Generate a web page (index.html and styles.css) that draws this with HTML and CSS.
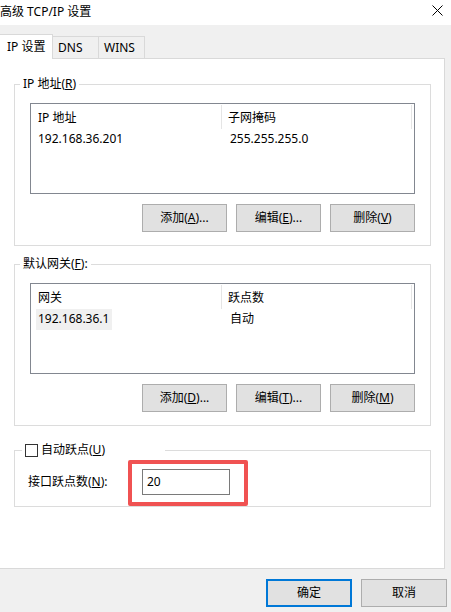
FILE: index.html
```html
<!DOCTYPE html>
<html lang="zh-CN">
<head>
<meta charset="utf-8">
<title>高级 TCP/IP 设置</title>
<link rel="stylesheet" href="styles.css">
</head>
<body>
<div class="window">
  <div class="titlebar">
    <span class="title">高级 TCP/IP 设置</span>
    <svg class="close" width="11" height="11" viewBox="0 0 11 11"><path d="M0.5 0.5 L10.5 10.5 M10.5 0.5 L0.5 10.5" stroke="#000" stroke-width="1" fill="none"/></svg>
  </div>
  <div class="tabs">
    <div class="tab active">IP 设置</div>
    <div class="tab">DNS</div>
    <div class="tab">WINS</div>
  </div>
  <div class="panel">
    <div class="group g1">
      <span class="legend">IP 地址(<u>R</u>)</span>
      <div class="list">
        <div class="lhead">
          <div class="col">IP 地址</div>
          <div class="col">子网掩码</div>
        </div>
        <div class="lrow">
          <div class="cell"><span class="val">192.168.36.201</span></div>
          <div class="cell"><span class="val">255.255.255.0</span></div>
        </div>
      </div>
      <div class="btnrow">
        <button class="btn">添加(<u>A</u>)...</button>
        <button class="btn">编辑(<u>E</u>)...</button>
        <button class="btn">删除(<u>V</u>)</button>
      </div>
    </div>
    <div class="group g2">
      <span class="legend">默认网关(<u>F</u>):</span>
      <div class="list">
        <div class="lhead">
          <div class="col">网关</div>
          <div class="col">跃点数</div>
        </div>
        <div class="lrow">
          <div class="cell"><span class="val sel">192.168.36.1</span></div>
          <div class="cell"><span class="val">自动</span></div>
        </div>
      </div>
      <div class="btnrow">
        <button class="btn">添加(<u>D</u>)...</button>
        <button class="btn">编辑(<u>T</u>)...</button>
        <button class="btn">删除(<u>M</u>)</button>
      </div>
    </div>
    <div class="group g3">
      <span class="legend checklegend"><span class="checkbox"></span><span>自动跃点(<u>U</u>)</span></span>
      <div class="metric">
        <span class="mlabel">接口跃点数(<u>N</u>):</span>
        <span class="input">20</span>
      </div>
      <div class="highlight"></div>
    </div>
  </div>
  <div class="footer">
    <button class="btn dlg primary">确定</button>
    <button class="btn dlg">取消</button>
  </div>
</div>
</body>
</html>
```

FILE: styles.css
```css
* { box-sizing: border-box; }
html, body {
  margin: 0;
  padding: 0;
}
body {
  width: 451px;
  height: 612px;
  overflow: hidden;
  background: #f0f0f0;
  font: 12px/16px "Noto Sans", "Noto Sans CJK SC", sans-serif;
  color: #000;
}
u { text-decoration: underline; text-underline-offset: 1px; }

.window {
  display: flex;
  flex-direction: column;
  height: 612px;
}

.titlebar {
  height: 25px;
  background: #fff;
  display: flex;
  align-items: center;
  justify-content: space-between;
  padding: 0 8px 2px 0;
}
.title { font-size: 12px; }
.close { display: block; margin-top: -3px; }

.tabs {
  height: 33px;
  display: flex;
  align-items: flex-end;
}
.tab {
  height: 22px;
  width: 46px;
  border: 1px solid #d9d9d9;
  border-left: none;
  border-bottom: none;
  background: #f0f0f0;
  padding: 3px 0 0 5px;
}
.tab.active {
  width: 53px;
  height: 25px;
  margin-bottom: -1px;
  background: #fff;
  position: relative;
  z-index: 1;
  padding: 4px 0 0 7px;
}

.panel {
  width: 445px;
  height: 511px;
  background: #fff;
  border: 1px solid #d9d9d9;
  border-left: none;
  padding: 25px 0 0 14px;
  display: flex;
  flex-direction: column;
}

.group {
  position: relative;
  width: 417px;
  border: 1px solid #dcdcdc;
  padding: 18px 15px 13px 15px;
}
.g2 { margin-top: 18px; }
.g3 { margin-top: 24px; padding: 18px 15px 11px 13px; }

.legend {
  position: absolute;
  top: -9px;
  left: 5px;
  background: #fff;
  padding: 0 3px;
  line-height: 16px;
}
.checklegend {
  left: 7px;
  width: 143px;
  display: flex;
  align-items: center;
  gap: 3px;
  top: -10px;
  height: 18px;
}
.checkbox {
  width: 13px;
  height: 13px;
  border: 1px solid #333;
  background: #fff;
}

.list {
  height: 91px;
  border: 1px solid #828790;
  background: #fff;
}
.lhead {
  height: 25px;
  display: flex;
}
.col {
  width: 191px;
  padding: 5px 0 0 7px;
  border-right: 1px solid #e5e5e5;
  margin: 1px 0 0 0;
  height: 24px;
}
.col + .col { width: 190px; padding-left: 6px; }
.lrow {
  display: flex;
  height: 21px;
}
.cell {
  width: 191px;
  padding: 0 0 0 5px;
  display: flex;
  align-items: center;
}
.cell + .cell { padding-left: 6px; }
.val { padding: 2px 3px 3px 2px; }
.val.sel { background: #f0f0f0; }

.btnrow {
  margin-top: 10px;
  display: flex;
  justify-content: flex-end;
  gap: 9px;
}
.btn {
  width: 85px;
  height: 28px;
  background: #e1e1e1;
  border: 1px solid #adadad;
  font: inherit;
  color: #000;
  padding: 0;
  margin: 0;
}

.metric {
  display: flex;
  align-items: center;
}
.mlabel { width: 114px; }
.input {
  width: 88px;
  height: 26px;
  border: 1px solid #7a7a7a;
  padding: 4px 0 0 4px;
  background: #fff;
}
.highlight {
  position: absolute;
  left: 113px;
  top: 9px;
  width: 120px;
  height: 46px;
  border: 4px solid #f05252;
  border-radius: 2px;
}

.footer {
  display: flex;
  justify-content: flex-end;
  gap: 9px;
  padding: 10px 4px 0 0;
}
.btn.dlg { width: 86px; }
.btn.primary { border: 2px solid #0078d7; }
```
